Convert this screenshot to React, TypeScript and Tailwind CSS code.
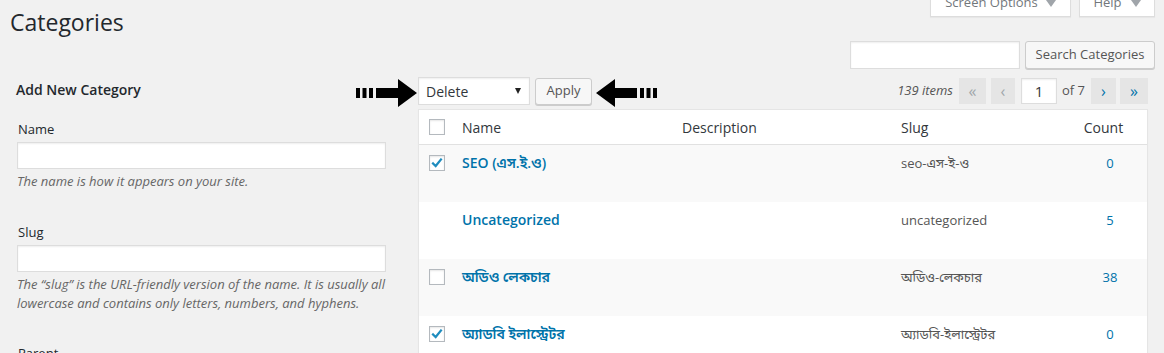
import React from "react";

const rows = [
  { name: "SEO (এস.ই.ও)", slug: "seo-এস-ই-ও", count: "0", check: "checked" },
  { name: "Uncategorized", slug: "uncategorized", count: "5", check: "none" },
  { name: "অডিও লেকচার", slug: "অডিও-লেকচার", count: "38", check: "empty" },
  { name: "অ্যাডবি ইলাস্ট্রেটর", slug: "অ্যাডবি-ইলাস্ট্রেটর", count: "0", check: "checked" },
];

function Checkbox({ checked }: { checked?: boolean }) {
  return (
    <div className="flex h-[16px] w-[16px] items-center justify-center border border-[#b4b9be] bg-white shadow-[inset_0_1px_2px_rgba(0,0,0,0.1)]">
      {checked && (
        <svg width="14" height="14" viewBox="0 0 16 16" fill="none" stroke="#1e8cbe" strokeWidth="2.6" strokeLinecap="square">
          <path d="M3.5 8.5L6.5 11.5L12.5 4" />
        </svg>
      )}
    </div>
  );
}

function Arrow({ flip }: { flip?: boolean }) {
  return (
    <svg width="62" height="30" viewBox="0 0 62 30" className={flip ? "-scale-x-100" : ""}>
      <rect x="1" y="10" width="4" height="10" fill="#000" />
      <rect x="7.5" y="10" width="4" height="10" fill="#000" />
      <rect x="14" y="10" width="4" height="10" fill="#000" />
      <polygon points="21,10 43,10 43,1 62,15 43,29 43,20 21,20" fill="#000" />
    </svg>
  );
}

function Tri() {
  return <span className="inline-block h-0 w-0 border-x-[5px] border-t-[7px] border-x-transparent border-t-[#a0a5aa]" />;
}

export default function App() {
  return (
    <div className="relative h-[353px] w-full overflow-hidden bg-[#f1f1f1] font-['Open_Sans','Noto_Sans','Noto_Sans_Bengali',sans-serif] text-[#444]">
      {/* screen meta tabs */}
      <div className="absolute right-[9px] top-[-11px] flex gap-[8px]">
        <div className="flex h-[28px] w-[141px] items-center justify-center gap-[8px] border border-[#ddd] bg-white text-[13px] text-[#72777c] shadow-[0_1px_1px_rgba(0,0,0,0.04)]">
          <span>Screen Options</span>
          <Tri />
        </div>
        <div className="flex h-[28px] w-[76px] items-center justify-center gap-[9px] border border-[#ddd] bg-white text-[13px] text-[#72777c] shadow-[0_1px_1px_rgba(0,0,0,0.04)]">
          <span>Help</span>
          <Tri />
        </div>
      </div>

      <div className="flex items-start justify-between pl-[10px] pr-[9px]">
        <h1 className="pt-[8px] text-[23px] leading-[29px] text-[#23282d]">Categories</h1>
        <div className="mt-[41px] flex gap-[5px]">
          <div className="h-[28px] w-[170px] border border-[#ddd] bg-white shadow-[inset_0_1px_2px_rgba(0,0,0,0.07)]" />
          <div className="flex h-[28px] w-[130px] items-center justify-center rounded-[3px] border border-[#ccc] bg-[#f7f7f7] text-[13px] text-[#555] shadow-[0_1px_0_#ccc]">
            Search Categories
          </div>
        </div>
      </div>

      <div className="mt-[8px] flex pl-[17px]">
        {/* left column */}
        <div className="w-[369px] pt-px text-[13px]">
          <h2 className="-ml-px text-[14px] font-semibold leading-[24px] text-[#23282d]">Add New Category</h2>
          <div className="mt-[18px] pl-px leading-[19px] text-[#23282d]">Name</div>
          <div className="mt-[3px] h-[27px] border border-[#ddd] bg-white shadow-[inset_0_1px_2px_rgba(0,0,0,0.07)]" />
          <p className="mt-[3px] italic leading-[19px] text-[#666]">The name is how it appears on your site.</p>
          <div className="mt-[32px] pl-px leading-[19px] text-[#23282d]">Slug</div>
          <div className="mt-[3px] h-[27px] border border-[#ddd] bg-white shadow-[inset_0_1px_2px_rgba(0,0,0,0.07)]" />
          <p className="mt-[3px] italic leading-[19px] text-[#666]">
            The “slug” is the URL-friendly version of the name. It is usually all lowercase and contains only letters, numbers, and hyphens.
          </p>
          <div className="mt-[31px] pl-px leading-[19px] text-[#23282d]">Parent</div>
        </div>

        {/* right column */}
        <div className="ml-[32px] w-[730px]">
          <div className="flex h-[28px] items-center justify-between">
            <div className="relative flex items-center gap-[5px]">
              <div className="absolute left-[-63px] top-[1px]">
                <Arrow />
              </div>
              <div className="flex h-[28px] w-[112px] items-center justify-between border border-[#ddd] bg-white pl-[7px] pr-[8px] text-[14px] text-[#32373c] shadow-[inset_0_1px_2px_rgba(0,0,0,0.07)]">
                <span>Delete</span>
                <span className="inline-block h-0 w-0 border-x-[3.5px] border-t-[6px] border-x-transparent border-t-[#222]" />
              </div>
              <div className="flex h-[27px] w-[57px] items-center justify-center rounded-[3px] border border-[#ccc] bg-[#f7f7f7] text-[13px] text-[#555] shadow-[0_1px_0_#ccc]">
                Apply
              </div>
              <div className="absolute left-[178px] top-[1px]">
                <Arrow flip />
              </div>
            </div>
            <div className="flex items-center text-[13px]">
              <span className="mr-[6px] italic text-[#555]">139 items</span>
              <span className="flex h-[26px] w-[27px] items-center justify-center bg-[#e5e5e5] text-[16px] text-[#a0a5aa]">«</span>
              <span className="ml-[5px] flex h-[26px] w-[24px] items-center justify-center bg-[#e5e5e5] text-[16px] text-[#a0a5aa]">‹</span>
              <span className="ml-[6px] flex h-[26px] w-[36px] items-center justify-center border border-[#ddd] bg-white text-[15px] text-[#32373c] shadow-[inset_0_1px_2px_rgba(0,0,0,0.07)]">1</span>
              <span className="ml-[5px] text-[#555]">of 7</span>
              <span className="ml-[6px] flex h-[26px] w-[25px] items-center justify-center bg-[#e5e5e5] text-[16px] text-[#0073aa]">›</span>
              <span className="ml-[4px] flex h-[26px] w-[28px] items-center justify-center bg-[#e5e5e5] text-[16px] text-[#0073aa]">»</span>
            </div>
          </div>

          <div className="mt-[4px] border border-[#e5e5e5] bg-white shadow-[0_1px_1px_rgba(0,0,0,0.04)]">
            <div className="grid h-[35px] grid-cols-[33px_220px_219px_176px_1fr] items-center border-b border-[#e1e1e1] text-[14px] text-[#32373c]">
              <div className="pl-[10px]">
                <Checkbox />
              </div>
              <div className="pl-[10px]">Name</div>
              <div className="pl-[10px]">Description</div>
              <div className="pl-[10px]">Slug</div>
              <div className="pr-[7px] text-center">Count</div>
            </div>
            {rows.map((r, i) => (
              <div
                key={r.slug}
                className={`grid h-[57px] grid-cols-[33px_220px_219px_176px_1fr] items-start ${i % 2 === 0 ? "bg-[#f9f9f9]" : "bg-white"}`}
              >
                <div className="pl-[10px] pt-[10px]">
                  {r.check !== "none" && <Checkbox checked={r.check === "checked"} />}
                </div>
                <div className="pl-[10px] pt-[8px] text-[14px] font-semibold leading-[20px] text-[#0073aa]">{r.name}</div>
                <div />
                <div className="pl-[10px] pt-[8px] text-[13px] leading-[20px] text-[#555]">{r.slug}</div>
                <div className="pl-[6px] pt-[8px] text-center text-[13px] leading-[20px] text-[#0073aa]">{r.count}</div>
              </div>
            ))}
          </div>
        </div>
      </div>
    </div>
  );
}
